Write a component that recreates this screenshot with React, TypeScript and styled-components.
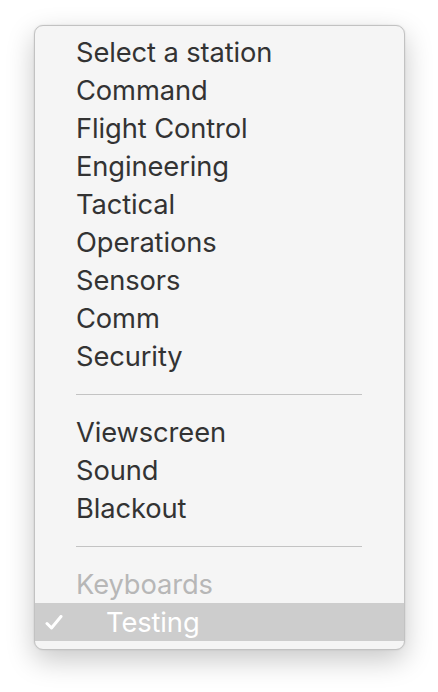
import React from "react";
import styled, { createGlobalStyle } from "styled-components";

const Global = createGlobalStyle`
  html, body { margin: 0; padding: 0; background: #ffffff; }
  body { font-family: "Inter", "Liberation Sans", sans-serif; }
`;

const Page = styled.div`
  padding: 25px 0 0 34px;
  width: 438px;
  height: 692px;
  box-sizing: border-box;
`;

const Menu = styled.div`
  width: 371px;
  box-sizing: border-box;
  background: #f5f5f5;
  border: 1px solid #c2c2c2;
  border-radius: 9px;
  padding: 7px 0 8px;
  box-shadow: 0 10px 28px rgba(0, 0, 0, 0.22), 0 0 2px rgba(0, 0, 0, 0.12);
  display: flex;
  flex-direction: column;
`;

const Item = styled.div<{ $muted?: boolean; $selected?: boolean; $indent?: boolean }>`
  position: relative;
  height: 38px;
  display: flex;
  align-items: center;
  padding-left: ${(p) => (p.$indent ? 71 : 41)}px;
  font-size: 27.3px;
  letter-spacing: -0.1px;
  color: ${(p) => (p.$selected ? "#ffffff" : p.$muted ? "#b7b7b7" : "#333333")};
  background: ${(p) => (p.$selected ? "#cdcdcd" : "transparent")};
`;

const Separator = styled.div`
  height: 38px;
  display: flex;
  align-items: center;
  padding: 0 42px 0 41px;
  &::after {
    content: "";
    flex: 1;
    height: 1px;
    background: #c3c3c3;
  }
`;

const Check = styled.svg`
  position: absolute;
  left: 10px;
  top: 12px;
`;

const stations = [
  "Select a station",
  "Command",
  "Flight Control",
  "Engineering",
  "Tactical",
  "Operations",
  "Sensors",
  "Comm",
  "Security",
];

const views = ["Viewscreen", "Sound", "Blackout"];

export default function App() {
  return (
    <>
      <Global />
      <Page>
        <Menu>
          {stations.map((s) => (
            <Item key={s}>{s}</Item>
          ))}
          <Separator />
          {views.map((s) => (
            <Item key={s}>{s}</Item>
          ))}
          <Separator />
          <Item $muted>Keyboards</Item>
          <Item $selected $indent>
            <Check width="18" height="15" viewBox="0 0 18 15">
              <path d="M2 8.5 L6.5 13 L16 1.5" fill="none" stroke="#ffffff" strokeWidth="3" strokeLinecap="round" strokeLinejoin="round" />
            </Check>
            Testing
          </Item>
        </Menu>
      </Page>
    </>
  );
}
